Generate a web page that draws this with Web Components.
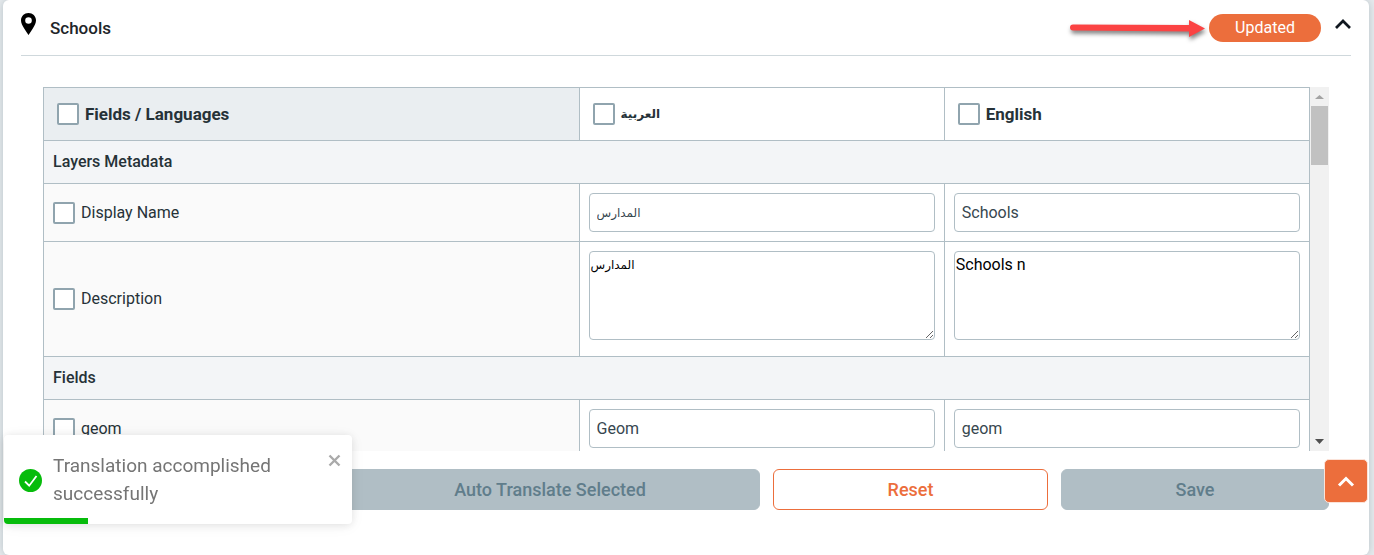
<!DOCTYPE html>
<html lang="en">
<head>
<meta charset="utf-8">
<meta name="viewport" content="width=device-width, initial-scale=1">
<title>Schools</title>
<style>
  :root {
    --line: #b0bec5;
    --accent: #ec6e3c;
    --muted: #b0bec5;
    --ink: #263238;
  }
  body {
    margin: 0;
    padding: 0 5px 0 3px;
    background-color: #e7ebee;
    color: var(--ink);
    font: 16px/24px Roboto, "DejaVu Sans", sans-serif;
  }
</style>
</head>
<body>

<template id="template-layer-card">
  <style>
    :host {
      display: block;
      box-sizing: border-box;
      min-height: 100vh;
      padding: 0 18px 44px;
      background-color: #fff;
      border-radius: 6px;
      box-shadow: 0 0 8px rgba(38, 70, 84, 0.25);
    }
    header {
      display: flex;
      align-items: center;
      height: 55px;
      border-bottom: 1px solid #cfd8dc;
    }
    h2 {
      flex: 1;
      margin: 0 0 0 14px;
      font-size: 17px;
      font-weight: 500;
      color: #212529;
    }
    .pin, .fold svg {
      display: block;
    }
    .pin {
      margin-bottom: 8px;
    }
    .badge {
      width: 112px;
      margin: 0 14px 0 4px;
      border-radius: 14px;
      background-color: var(--accent);
      color: #fff;
      line-height: 28px;
      text-align: center;
    }
    .fold {
      margin: 0 0 8px;
      padding: 0;
      border: 0;
      background: none;
      cursor: pointer;
    }
    .body {
      padding: 31px 22px 0;
    }
    .body[hidden] {
      display: none;
    }
  </style>
  <header>
    <svg class="pin" width="15" height="22" viewBox="0 0 15 22"><path fill="#000" fill-rule="evenodd" d="M7.500 0C3.300 0 0 3.200 0 7.300c0 2.900 1.300 5.100 3.200 8.100 1.300 2.100 2.800 4.100 4.300 6.600 1.500-2.500 3-4.500 4.300-6.600 1.900-3 3.200-5.200 3.200-8.100C15 3.200 11.700 0 7.500 0zm0 4.200a3.300 3.300 0 1 1 0 6.600 3.300 3.300 0 0 1 0-6.600z"/></svg>
    <h2><slot name="title"></slot></h2>
    <slot name="pointer"></slot>
    <span class="badge"><slot name="status"></slot></span>
    <button class="fold" type="button" aria-label="Collapse" aria-expanded="true">
      <svg width="16" height="10" viewBox="0 0 16 10"><path fill="none" stroke="#111820" stroke-width="2.700" d="M1 9l7-7 7 7"/></svg>
    </button>
  </header>
  <div class="body"><slot></slot></div>
</template>

<template id="template-red-arrow">
  <style>
    :host {
      display: block;
      flex: none;
    }
    svg {
      display: block;
      overflow: visible;
      filter: drop-shadow(1px 3px 2px rgba(0, 0, 0, 0.5));
    }
  </style>
  <svg width="135" height="18" viewBox="0 0 135 18"><path fill="#fb4343" d="M3 5.500L119 6V1l16 8.500L119 18v-5.500L3 11.500a3 3 0 0 1 0-6z"/></svg>
</template>

<template id="template-translation-table">
  <style>
    :host {
      display: flex;
      height: 364px;
    }
    .scroller {
      flex: 1;
      min-width: 0;
      overflow: auto;
      scrollbar-width: none;
    }
    table {
      width: 100%;
      table-layout: fixed;
      border-collapse: separate;
      border-spacing: 0;
      border: solid var(--line);
      border-width: 1px 0 0 1px;
    }
    .names {
      width: 42.3%;
    }
    th, td {
      box-sizing: border-box;
      padding: 9px;
      border: solid var(--line);
      border-width: 0 1px 1px 0;
      text-align: left;
    }
    thead th {
      height: 53px;
      padding: 0 13px;
      font-size: 17px;
      font-weight: 700;
    }
    thead th:first-child {
      background-color: #eaeef1;
    }
    .section th {
      height: 43px;
      padding: 0 9px;
      background-color: #f3f5f7;
      font-weight: 500;
    }
    .field th {
      background-color: #fafafa;
      font-weight: 400;
    }
    .long td {
      padding-bottom: 16px;
    }
    label {
      display: flex;
      align-items: center;
      gap: 6px;
    }
    input[type=checkbox] {
      appearance: none;
      box-sizing: border-box;
      width: 22px;
      height: 22px;
      margin: 0;
      border: 2px solid #90a4ae;
      border-radius: 2px;
      background-color: #fff;
    }
    input[type=checkbox]:checked {
      background-color: var(--accent);
    }
    input[type=text], textarea {
      display: block;
      box-sizing: border-box;
      width: 100%;
      margin: 0;
      border: 1px solid var(--line);
      border-radius: 4px;
      background-color: #fff;
      font: inherit;
    }
    input[type=text] {
      height: 39px;
      padding: 0 7px;
      color: #37474f;
    }
    textarea {
      height: 89px;
      padding: 1px;
      color: #000;
      resize: both;
    }
    span:lang(ar), input[type=text]:lang(ar), textarea:lang(ar) {
      font-size: 12px;
    }
    .bar {
      display: flex;
      flex-direction: column;
      align-items: center;
      width: 19px;
      background-color: #f1f1f1;
    }
    .bar svg {
      display: block;
      flex: none;
    }
    .track {
      flex: 1;
      width: 17px;
    }
    .thumb {
      height: 18%;
      background-color: #c1c1c1;
    }
  </style>
  <div class="scroller">
    <table>
      <colgroup><col class="names"><col><col></colgroup>
      <thead><tr></tr></thead>
      <tbody></tbody>
    </table>
  </div>
  <div class="bar">
    <svg width="19" height="19" viewBox="0 0 19 19"><path fill="#a3a3a3" d="M5 12h9L9.500 8z"/></svg>
    <div class="track"><div class="thumb"></div></div>
    <svg width="19" height="19" viewBox="0 0 19 19"><path fill="#505050" d="M5 7h9l-4.500 5z"/></svg>
  </div>
</template>

<template id="template-action-bar">
  <style>
    :host {
      display: grid;
      grid-template-columns: 284fr 420fr 275fr 268fr;
      gap: 13px;
      margin-top: 18px;
    }
    ::slotted(:first-child) {
      grid-column-start: 2;
    }
  </style>
  <slot></slot>
</template>

<template id="template-action-button">
  <style>
    :host {
      display: block;
    }
    button {
      display: block;
      width: 100%;
      height: 41px;
      margin: 0;
      border: 1px solid var(--accent);
      border-radius: 6px;
      background-color: #fff;
      color: var(--accent);
      font: inherit;
      font-size: 18px;
      font-weight: 500;
      cursor: pointer;
    }
    button:disabled {
      border-color: var(--muted);
      background-color: var(--muted);
      color: #607d8b;
      cursor: default;
    }
  </style>
  <button type="button"><slot></slot></button>
</template>

<template id="template-toast-message">
  <style>
    :host {
      position: fixed;
      left: 4px;
      bottom: 31px;
      z-index: 2;
      display: block;
      box-sizing: border-box;
      width: 348px;
      overflow: hidden;
      border-radius: 4px;
      background-color: #fff;
      box-shadow: 0 1px 10px rgba(0, 0, 0, 0.1), 0 2px 15px rgba(0, 0, 0, 0.05);
      color: #757575;
      font-size: 19px;
      line-height: 28px;
    }
    .row {
      display: flex;
      align-items: center;
      gap: 11px;
      padding: 17px 11px 10px 15px;
    }
    p {
      flex: 1;
      margin: 0;
      padding-right: 40px;
    }
    svg {
      display: block;
      flex: none;
    }
    button {
      align-self: flex-start;
      margin: 2px 0 0;
      padding: 0;
      border: 0;
      background: none;
    }
    .progress {
      width: 24%;
      height: 6px;
      background-color: #07bc0c;
    }
  </style>
  <div class="row">
    <svg width="23" height="23" viewBox="0 0 23 23"><circle cx="11.500" cy="11.500" r="11.500" fill="#07bc0c"/><path fill="none" stroke="#fff" stroke-width="1.800" d="M6 12.500l4.200 4.200L17.500 7"/></svg>
    <p><slot></slot></p>
    <button type="button" aria-label="Close">
      <svg width="13" height="13" viewBox="0 0 13 13"><path stroke="#aaa" stroke-width="2.400" d="M1.500 1.500l10 10M11.500 1.500l-10 10"/></svg>
    </button>
  </div>
  <div class="progress"></div>
</template>

<template id="template-top-button">
  <style>
    :host {
      position: fixed;
      right: 6px;
      bottom: 52px;
      z-index: 2;
      display: block;
    }
    button {
      display: flex;
      align-items: center;
      justify-content: center;
      box-sizing: border-box;
      width: 44px;
      height: 44px;
      padding: 0;
      border: 1px solid #fbe3d9;
      border-radius: 5px;
      background-color: var(--accent);
    }
  </style>
  <button type="button" aria-label="Back to top">
    <svg width="18" height="12" viewBox="0 0 18 12"><path fill="none" stroke="#fff" stroke-width="3" d="M2 10.500L9 3.500l7 7"/></svg>
  </button>
</template>

<layer-card>
  <span slot="title">Schools</span>
  <red-arrow slot="pointer"></red-arrow>
  <span slot="status">Updated</span>
  <translation-table></translation-table>
  <action-bar>
    <action-button disabled>Auto Translate Selected</action-button>
    <action-button>Reset</action-button>
    <action-button disabled>Save</action-button>
  </action-bar>
</layer-card>
<toast-message>Translation accomplished successfully</toast-message>
<top-button></top-button>

<script>
  // base class: clones the template named after the tag
  class TemplateElement extends HTMLElement {
    constructor() {
      super();
      const temp = document.querySelector('#template-' + this.localName);
      this._root = this.attachShadow({ mode: 'open' });
      this._root.appendChild(temp.content.cloneNode(true));
    }
  }

  class LayerCard extends TemplateElement {
    constructor() {
      super();
      const body = this._root.querySelector('.body');
      const fold = this._root.querySelector('.fold');
      fold.addEventListener('click', () => {
        body.hidden = !body.hidden;
        fold.setAttribute('aria-expanded', !body.hidden);
      });
    }
  }

  const languages = ['العربية', 'English'];
  const rows = [
    { section: 'Layers Metadata' },
    { name: 'Display Name', values: ['المدارس', 'Schools'] },
    { name: 'Description', values: ['المدارس', 'Schools n'], long: true },
    { section: 'Fields' },
    { name: 'geom', values: ['Geom', 'geom'] }
  ];

  // the language of a text, by its script
  const langOf = (text) => /[\u0600-\u06ff]/.test(text) ? 'ar' : 'en';

  class TranslationTable extends TemplateElement {
    constructor() {
      super();
      const tick = (text) => `<label><input type="checkbox"><span lang="${langOf(text)}">${text}</span></label>`;
      this._root.querySelector('thead tr').innerHTML =
        ['Fields / Languages'].concat(languages).map((t) => `<th scope="col">${tick(t)}</th>`).join('');
      this._root.querySelector('tbody').innerHTML = rows.map((row) => {
        if (row.section) return `<tr class="section"><th colspan="3">${row.section}</th></tr>`;
        const cells = row.values.map((value, i) => {
          const attrs = `lang="${langOf(value)}" aria-label="${row.name}, ${languages[i]}"`;
          return row.long
            ? `<td><textarea ${attrs}>${value}</textarea></td>`
            : `<td><input type="text" ${attrs} value="${value}"></td>`;
        });
        return `<tr class="field${row.long ? ' long' : ''}"><th scope="row">${tick(row.name)}</th>${cells.join('')}</tr>`;
      }).join('');

      // keep the drawn scrollbar in step with the scroller
      const scroller = this._root.querySelector('.scroller');
      const track = this._root.querySelector('.track');
      const thumb = this._root.querySelector('.thumb');
      scroller.addEventListener('scroll', () => {
        const part = scroller.scrollTop / (scroller.scrollHeight - scroller.clientHeight);
        thumb.style.marginTop = part * (track.clientHeight - thumb.clientHeight) + 'px';
      });
    }
  }

  class ActionButton extends TemplateElement {
    connectedCallback() {
      this._root.querySelector('button').disabled = this.hasAttribute('disabled');
    }
  }

  class ToastMessage extends TemplateElement {
    constructor() {
      super();
      this._root.querySelector('button').addEventListener('click', () => this.remove());
    }
  }

  class TopButton extends TemplateElement {
    constructor() {
      super();
      this._root.querySelector('button').addEventListener('click', () => window.scrollTo(0, 0));
    }
  }

  customElements.define('layer-card', LayerCard);
  customElements.define('red-arrow', class extends TemplateElement {});
  customElements.define('translation-table', TranslationTable);
  customElements.define('action-bar', class extends TemplateElement {});
  customElements.define('action-button', ActionButton);
  customElements.define('toast-message', ToastMessage);
  customElements.define('top-button', TopButton);
</script>
</body>
</html>
